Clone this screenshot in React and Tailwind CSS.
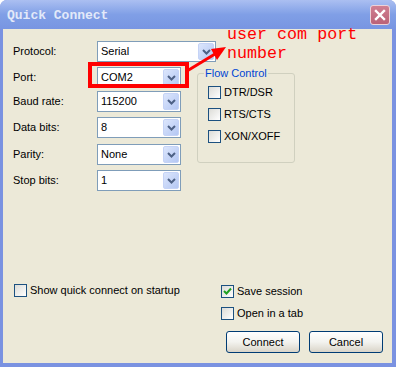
import React from "react";

function Chevron() {
  return (
    <svg width="9" height="6" viewBox="0 0 9 6">
      <path d="M1 1 L4.5 4.5 L8 1" fill="none" stroke="#4d6185" strokeWidth="2" />
    </svg>
  );
}

function Select({ value, width }) {
  return (
    <div className={`flex h-[21px] items-center border border-[#7f9db9] bg-white p-px ${width}`}>
      <span className="flex-1 pl-[2px] leading-none">{value}</span>
      <div className="flex h-full w-[16px] items-center justify-center rounded-[2px] border border-[#c5d3f6] bg-gradient-to-br from-[#dce6fc] to-[#b4c7f3]">
        <Chevron />
      </div>
    </div>
  );
}

function Row({ label, value, width = "w-[84px]" }) {
  return (
    <div className="flex items-center">
      <span className="w-[84px]">{label}</span>
      <Select value={value} width={width} />
    </div>
  );
}

function Checkbox({ label, checked }) {
  return (
    <div className="flex h-[13px] items-center gap-[3px]">
      <div className="flex h-[13px] w-[13px] items-center justify-center border border-[#1c5180] bg-gradient-to-br from-[#dcdcd7] to-white">
        {checked && (
          <svg width="9" height="9" viewBox="0 0 9 9">
            <path d="M1 4 L3.5 6.5 L8 1.5" fill="none" stroke="#21a121" strokeWidth="2" />
          </svg>
        )}
      </div>
      <span className="leading-none">{label}</span>
    </div>
  );
}

function Button({ children }) {
  return (
    <button className="h-[22px] w-[74px] rounded-[3px] border border-[#003c74] bg-gradient-to-b from-white via-[#f3f3ef] to-[#d9d4c8] text-[11px] leading-none text-black">
      {children}
    </button>
  );
}

export default function App() {
  return (
    <div className="h-[367px] w-[396px] bg-white font-['Liberation_Sans',Arial,sans-serif] text-[11px] text-black">
      <div className="relative flex h-full flex-col overflow-hidden rounded-t-[7px] bg-[#7a92e1]">
        {/* title bar */}
        <div className="flex h-[29px] shrink-0 items-center justify-between bg-gradient-to-b from-[#abbff1] via-[#809fe6] to-[#7895e2] pl-[7px] pr-[6px]">
          <span className="mt-[2px] font-['Liberation_Mono',monospace] text-[13px] font-bold text-[#e2e9f9]">
            Quick Connect
          </span>
          <div className="flex h-[20px] w-[20px] items-center justify-center rounded-[3px] border border-[#ecd2d8] bg-gradient-to-b from-[#d07f91] to-[#bb6277]">
            <svg width="12" height="12" viewBox="0 0 12 12">
              <path d="M2 2 L10 10 M10 2 L2 10" stroke="white" strokeWidth="2.4" strokeLinecap="square" />
            </svg>
          </div>
        </div>

        {/* body */}
        <div className="mb-[4px] ml-[3px] mr-[4px] flex flex-1 flex-col bg-[#ece9d8] pl-[10px] pt-[12px]">
          <Row label="Protocol:" value="Serial" width="w-[119px]" />

          <div className="mt-[5px] flex items-start">
            <div className="flex flex-col">
              <Row label="Port:" value="COM2" />
              <div className="mt-[3px]">
                <Row label="Baud rate:" value="115200" />
              </div>
              <div className="mt-[5px]">
                <Row label="Data bits:" value="8" />
              </div>
              <div className="mt-[6px]">
                <Row label="Parity:" value="None" />
              </div>
              <div className="mt-[5px]">
                <Row label="Stop bits:" value="1" />
              </div>
            </div>

            {/* Flow Control group */}
            <div className="relative ml-[16px] mt-[6px] h-[90px] w-[98px] rounded-[3px] border border-[#d0d0bf] pl-[10px] pt-[12px]">
              <span className="absolute -top-[7px] left-[6px] bg-[#ece9d8] px-px leading-[13px] text-[#0046d5]">
                Flow Control
              </span>
              <div className="flex flex-col gap-[9px]">
                <Checkbox label="DTR/DSR" />
                <Checkbox label="RTS/CTS" />
                <Checkbox label="XON/XOFF" />
              </div>
            </div>
          </div>

          {/* bottom */}
          <div className="mt-auto flex items-start justify-between pb-[10px] pr-[9px]">
            <div className="ml-px">
              <Checkbox label="Show quick connect on startup" />
            </div>
            <div className="mt-px flex flex-col">
              <Checkbox label="Save session" checked />
              <div className="mt-[9px]">
                <Checkbox label="Open in a tab" />
              </div>
              <div className="ml-[5px] mt-[11px] flex gap-[9px]">
                <Button>Connect</Button>
                <Button>Cancel</Button>
              </div>
            </div>
          </div>
        </div>

        {/* annotation */}
        <div className="absolute left-[88px] top-[62px] h-[26px] w-[101px] border-[4px] border-[#ff0000]" />
        <svg className="absolute left-0 top-0" width="396" height="367" viewBox="0 0 396 367">
          <line x1="187" y1="71" x2="215" y2="54" stroke="#ff0000" strokeWidth="3" />
          <polygon points="226,47 211,49 217,60" fill="#ff0000" />
        </svg>
        <div className="absolute left-[227px] top-[25px] font-['Liberation_Mono',monospace] text-[16.7px] leading-[19px] text-[#ff0000]">
          user com port
          <br />
          number
        </div>
      </div>
    </div>
  );
}
